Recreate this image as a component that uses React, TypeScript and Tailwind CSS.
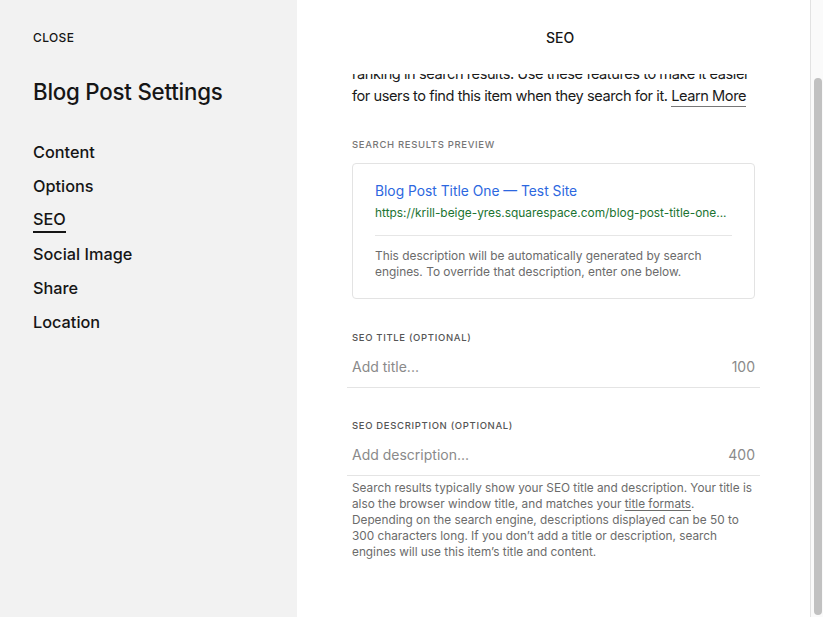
import React from "react";

const font = { fontFamily: "Inter, 'Noto Sans', sans-serif" };

export default function App() {
  const nav = ["Content", "Options", "SEO", "Social Image", "Share", "Location"];
  return (
    <div style={font} className="flex h-[617px] w-[823px] overflow-hidden bg-white text-[#111]">
      <aside className="w-[297px] shrink-0 bg-[#f2f2f2] pl-[33px]">
        <div className="pt-[30px] text-[12px] font-medium leading-[15px] tracking-[0.03em] text-[#161616]">CLOSE</div>
        <h1 className="mt-[34px] text-[22.3px] font-medium leading-[26px] tracking-[-0.01em] text-[#161616]">Blog Post Settings</h1>
        <nav className="mt-[35px] flex flex-col gap-[10px]">
          {nav.map((n) => (
            <div key={n} className="flex h-[24px] items-center">
              <span
                className={
                  "text-[16.3px] font-medium leading-[24px] text-[#161616] " +
                  (n === "SEO" ? "border-b-2 border-[#161616] leading-[22px]" : "")
                }
              >
                {n}
              </span>
            </div>
          ))}
        </nav>
      </aside>
      <main className="relative flex w-[526px] min-w-0 shrink-0 flex-col overflow-hidden">
        <header className="flex h-[74px] shrink-0 justify-center pt-[29px] text-[14px] font-medium leading-[18px] text-[#161616]">
          SEO
        </header>
        <div className="w-[513px] flex-1 overflow-hidden">
          <div className="-mt-[33px] px-[55px]">
            <p className="whitespace-nowrap text-[14.6px] leading-[22px] tracking-[-0.03em] text-[#1a1a1a]">
              SEO settings help search engines understand this item and improve its
              <br />
              ranking in search results. Use these features to make it easier
              <br />
              for users to find this item when they search for it.{" "}
              <span className="border-b border-[#777] pb-[1px]">Learn More</span>
            </p>
            <div className="mt-[32px] text-[9.5px] font-medium leading-[12px] tracking-[0.07em] text-[#777]">
              SEARCH RESULTS PREVIEW
            </div>
            <div className="mt-[12px] h-[136px] rounded-[4px] border border-[#e3e3e3] px-[22px] pt-[17px]">
              <div className="text-[13.8px] leading-[20px] text-[#2c67e0]">Blog Post Title One — Test Site</div>
              <div className="mt-[4px] whitespace-nowrap text-[11.9px] leading-[16px] text-[#1b7331]">
                https://krill-beige-yres.squarespace.com/blog-post-title-one...
              </div>
              <div className="mt-[14px] border-t border-[#e6e6e6]" />
              <p className="mt-[12px] whitespace-nowrap text-[11.9px] leading-[16px] text-[#6b6b6b]">
                This description will be automatically generated by search
                <br />
                engines. To override that description, enter one below.
              </p>
            </div>

            <div className="mt-[33px] text-[9.5px] font-medium leading-[12px] tracking-[0.07em] text-[#555]">
              SEO TITLE (OPTIONAL)
            </div>
            <div className="-mx-[5px] mt-[6px] flex h-[38px] items-center justify-between border-b border-[#e4e4e4] px-[5px] pb-[4px] text-[14px] text-[#8a8a8a]">
              <span>Add title...</span>
              <span>100</span>
            </div>

            <div className="mt-[32px] text-[9.5px] font-medium leading-[12px] tracking-[0.07em] text-[#555]">
              SEO DESCRIPTION (OPTIONAL)
            </div>
            <div className="-mx-[5px] mt-[6px] flex h-[38px] items-center justify-between border-b border-[#e4e4e4] px-[5px] pb-[4px] text-[14px] text-[#8a8a8a]">
              <span>Add description...</span>
              <span>400</span>
            </div>
            <p className="mt-[4px] whitespace-nowrap text-[11.8px] leading-[16px] text-[#6b6b6b]">
              Search results typically show your SEO title and description. Your title is
              <br />
              also the browser window title, and matches your{" "}
              <span className="underline decoration-[#6b6b6b] underline-offset-2">title formats</span>.
              <br />
              Depending on the search engine, descriptions displayed can be 50 to
              <br />
              300 characters long. If you don’t add a title or description, search
              <br />
              engines will use this item’s title and content.
            </p>
          </div>
        </div>
        <div className="absolute right-0 top-0 h-full w-[13px] border-l border-[#e2e2e2] bg-[#fafafa]">
          <div className="absolute left-[3px] top-[78px] h-[537px] w-[8px] rounded-[4px] bg-[#c1c1c1]" />
        </div>
      </main>
    </div>
  );
}
